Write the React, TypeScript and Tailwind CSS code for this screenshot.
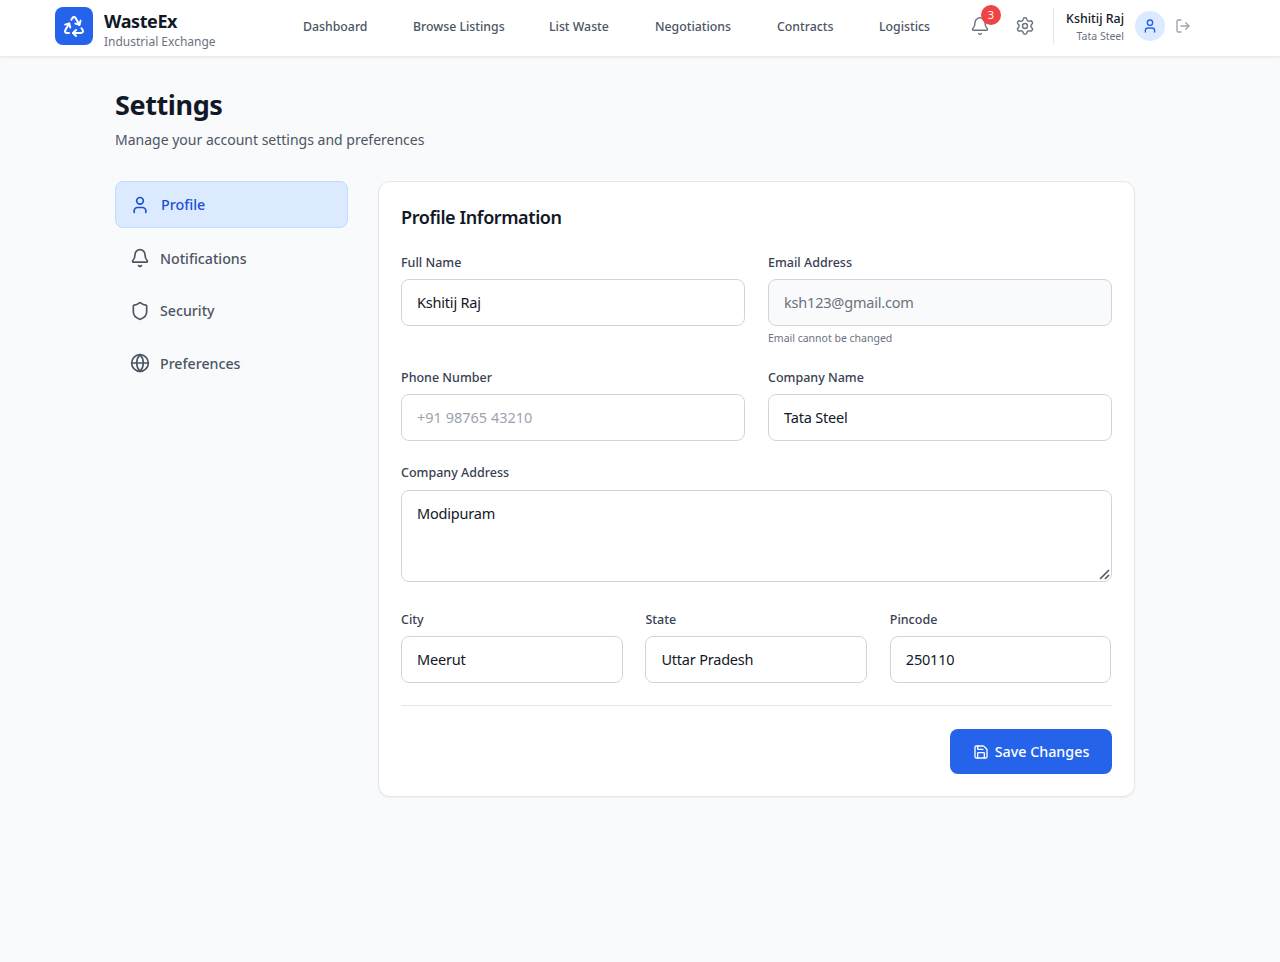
import { Bell, Globe, LogOut, Recycle, Save, Settings, Shield, User } from "lucide-react";
import React from "react";

const navLinks = [
  { name: "Dashboard", width: "w-[65px]" },
  { name: "Browse Listings", width: "w-[91px]" },
  { name: "List Waste", width: "w-[61px]" },
  { name: "Negotiations", width: "w-[77px]" },
  { name: "Contracts", width: "w-[57px]" },
  { name: "Logistics", width: "w-[52px]" },
];

const sideLinks = [
  { name: "Notifications", icon: Bell, className: "h-[52px]", iconClass: "-mt-[2px]" },
  { name: "Security", icon: Shield, className: "h-[52px]", iconClass: "" },
  { name: "Preferences", icon: Globe, className: "h-[53px]", iconClass: "-mt-[2px]" },
];

const Field = ({
  label,
  value,
  placeholder,
  disabled,
  hint,
}: {
  label: string;
  value?: string;
  placeholder?: string;
  disabled?: boolean;
  hint?: string;
}) => (
  <div className="min-w-0">
    <label className="block h-[19px] text-[12.5px] leading-[19px] font-medium text-[#374151]">{label}</label>
    <input
      readOnly
      value={value ?? ""}
      placeholder={placeholder}
      className={`mt-[7px] block h-[47px] w-full rounded-lg border border-[#d1d5db] px-[15px] pb-[2px] text-[14.5px] tracking-[-0.2px] outline-none placeholder:tracking-normal placeholder:text-[#9ca3af] ${
        disabled ? "bg-[#f9fafb] text-[#6b7280]" : "bg-white text-[#111827]"
      }`}
    />
    {hint && <p className="mt-[4px] h-[16px] text-[10.5px] leading-[16px] text-[#6b7280]">{hint}</p>}
  </div>
);

export default function App() {
  return (
    <div className="min-h-[962px] bg-[#f9fafb] font-['Noto_Sans',sans-serif]">
      <header className="flex h-14 items-center bg-white pb-1 pl-[55px] shadow-[0_1px_3px_rgba(0,0,0,0.1)]">
        <div className="flex h-[38px] w-[38px] shrink-0 items-center justify-center rounded-lg bg-[#2563eb] text-white">
          <Recycle className="h-6 w-6" />
        </div>
        <div className="mt-[7px] ml-[11px] w-[199px] shrink-0">
          <div className="text-lg leading-[24px] font-bold tracking-[-0.4px] text-[#111827]">WasteEx</div>
          <div className="mt-[1px] text-xs leading-[16px] text-[#6b7280]">Industrial Exchange</div>
        </div>
        <nav className="mt-[2px] flex shrink-0 gap-[45px]">
          {navLinks.map((link) => (
            <a key={link.name} className={`${link.width} text-[12.3px] leading-5 font-medium whitespace-nowrap text-[#4b5563]`}>
              {link.name}
            </a>
          ))}
        </nav>
        <div className="relative ml-[39px] shrink-0 text-[#6b7280]">
          <Bell className="h-5 w-5" strokeWidth={1.7} />
          <span className="absolute -top-[11px] left-[11px] flex h-5 w-5 items-center justify-center rounded-full bg-[#ef4444] text-[11px] text-white">
            3
          </span>
        </div>
        <Settings className="ml-[25px] h-5 w-5 shrink-0 text-[#6b7280]" strokeWidth={1.7} />
        <div className="ml-[18px] h-9 w-px shrink-0 bg-[#e5e7eb]" />
        <div className="mt-[3px] ml-3 w-[58px] shrink-0 text-right">
          <div className="text-[12.4px] leading-[16px] font-medium whitespace-nowrap text-[#111827]">Kshitij Raj</div>
          <div className="mt-[1px] text-[10.5px] leading-[16px] whitespace-nowrap text-[#6b7280]">Tata Steel</div>
        </div>
        <div className="ml-[11px] flex h-[30px] w-[30px] shrink-0 items-center justify-center rounded-full bg-[#dbeafe] text-[#2563eb]">
          <User className="h-4 w-4" />
        </div>
        <LogOut className="ml-[10px] h-4 w-4 shrink-0 text-[#9ca3af]" />
      </header>

      <main className="w-[1020px] translate-x-[115px] pt-[29px]">
        <h1 className="text-[27px] leading-[40px] font-bold tracking-[-0.4px] text-[#111827]">Settings</h1>
        <p className="mt-[5px] text-sm leading-5 text-[#4b5563]">Manage your account settings and preferences</p>

        <div className="mt-[31px] flex gap-[30px]">
          <aside className="w-[233px]">
            <div className="flex h-[47px] items-center gap-[11px] rounded-lg border border-[#bfdbfe] bg-[#dbeafe] pl-[14px] text-[14.3px] font-medium text-[#1d4ed8]">
              <User className="h-5 w-5" />
              Profile
            </div>
            <div className="mt-[5px]">
              {sideLinks.map((item) => (
                <div key={item.name} className={`flex items-center gap-[10px] pl-[15px] text-[14.2px] font-medium text-[#4b5563] ${item.className}`}>
                  <item.icon className={`h-5 w-5 ${item.iconClass}`} />
                  {item.name}
                </div>
              ))}
            </div>
          </aside>

          <section className="h-[616px] w-[757px] rounded-xl border border-[#e5e7eb] bg-white px-[22px] pt-[21px] shadow-[0_1px_2px_rgba(0,0,0,0.05)]">
            <h2 className="text-lg leading-7 font-semibold tracking-[-0.4px] text-[#111827]">Profile Information</h2>

            <div className="mt-[22px] grid grid-cols-2 gap-x-[23px]">
              <Field label="Full Name" value="Kshitij Raj" />
              <Field label="Email Address" value="ksh123@gmail.com" disabled hint="Email cannot be changed" />
            </div>

            <div className="mt-[22px] grid grid-cols-2 gap-x-[23px]">
              <Field label="Phone Number" placeholder="+91 98765 43210" />
              <Field label="Company Name" value="Tata Steel" />
            </div>

            <div className="mt-[22px]">
              <label className="block h-[19px] text-[12.5px] leading-[19px] font-medium text-[#374151]">Company Address</label>
              <div className="relative mt-[8px]">
                <textarea
                  readOnly
                  value="Modipuram"
                  className="block h-[92px] w-full resize-none rounded-lg border border-[#d1d5db] bg-white px-[15px] py-[11px] text-[14.5px] leading-[22px] tracking-[-0.2px] text-[#111827] outline-none"
                />
                <svg className="absolute right-[2px] bottom-[2px] h-3 w-3" viewBox="0 0 12 12" fill="none" stroke="#4b5563" strokeWidth="1.6">
                  <path d="M2 11 11 2" />
                  <path d="M7 11 11 7" />
                </svg>
              </div>
            </div>

            <div className="mt-[28px] grid grid-cols-[222px_222px_221px] gap-x-[22.4px]">
              <Field label="City" value="Meerut" />
              <Field label="State" value="Uttar Pradesh" />
              <Field label="Pincode" value="250110" />
            </div>

            <div className="mt-[22px] border-t border-[#e5e7eb] pt-[23px]">
              <button className="ml-auto flex h-[45px] w-[162px] items-center justify-center gap-[6px] rounded-lg bg-[#2563eb] text-[14.3px] font-medium text-white">
                <Save className="h-4 w-4" />
                Save Changes
              </button>
            </div>
          </section>
        </div>
      </main>
    </div>
  );
}
